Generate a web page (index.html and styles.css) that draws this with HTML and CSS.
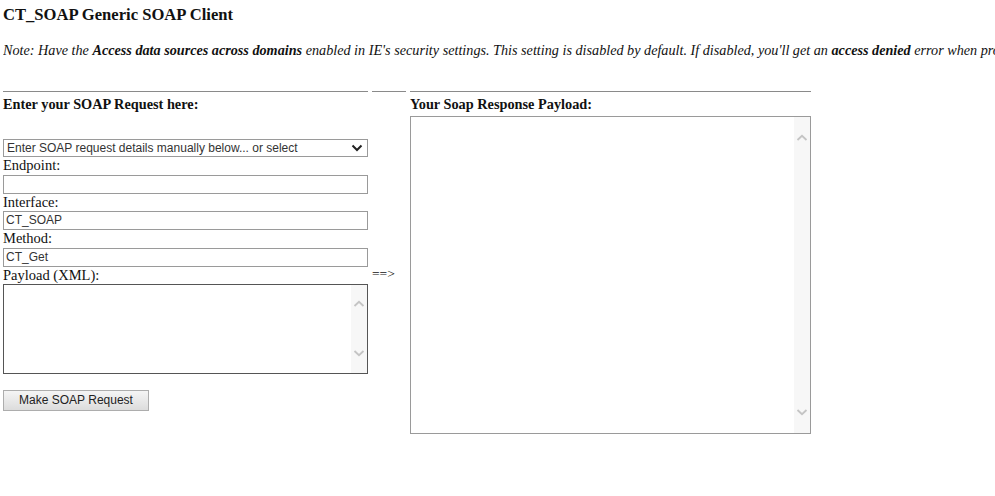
FILE: index.html
```html
<!DOCTYPE html>
<html>
<head>
<meta charset="utf-8">
<title>CT_SOAP Generic SOAP Client</title>
<link rel="stylesheet" href="styles.css">
</head>
<body>
<h3 class="title">CT_SOAP Generic SOAP Client</h3>
<p class="note">Note: Have the <b>Access data sources across domains</b> enabled in IE's security settings. This setting is disabled by default. If disabled, you'll get an <b>access denied</b> error when processing the request.</p>
<div class="layout">
  <div class="col col-req">
    <div class="head">Enter your SOAP Request here:</div>
    <div class="spacer"></div>
    <div class="select">
      <span class="select-text">Enter SOAP request details manually below... or select</span>
      <svg class="select-arrow" width="12" height="8" viewBox="0 0 12 8"><polyline points="1.5,1.5 6,6 10.5,1.5" fill="none" stroke="#222" stroke-width="2"/></svg>
    </div>
    <div class="label">Endpoint:</div>
    <div class="input"></div>
    <div class="label">Interface:</div>
    <div class="input">CT_SOAP</div>
    <div class="label">Method:</div>
    <div class="input">CT_Get</div>
    <div class="label">Payload (XML):</div>
    <div class="area area-req">
      <div class="area-body"></div>
      <div class="sbar">
        <svg width="12" height="8" viewBox="0 0 12 8"><polyline points="1.5,6 6,1.8 10.5,6" fill="none" stroke="#c4c4c4" stroke-width="1.8"/></svg>
        <svg width="12" height="8" viewBox="0 0 12 8"><polyline points="1.5,2 6,6.2 10.5,2" fill="none" stroke="#c4c4c4" stroke-width="1.8"/></svg>
      </div>
    </div>
    <div class="btn">Make SOAP Request</div>
  </div>
  <div class="col col-arrow">
    <div class="arrow">==&gt;</div>
  </div>
  <div class="col col-resp">
    <div class="head">Your Soap Response Payload:</div>
    <div class="area area-resp">
      <div class="area-body"></div>
      <div class="sbar">
        <svg width="12" height="8" viewBox="0 0 12 8"><polyline points="1.5,6 6,1.8 10.5,6" fill="none" stroke="#c4c4c4" stroke-width="1.8"/></svg>
        <svg width="12" height="8" viewBox="0 0 12 8"><polyline points="1.5,2 6,6.2 10.5,2" fill="none" stroke="#c4c4c4" stroke-width="1.8"/></svg>
      </div>
    </div>
  </div>
</div>
</body>
</html>
```

FILE: styles.css
```css
html, body {
  margin: 0;
  padding: 0;
  overflow: hidden;
  background: #fff;
}
body {
  padding: 0 0 0 3px;
  font-family: "Liberation Serif", "Times New Roman", serif;
  color: #111;
  font-size: 14.5px;
}
.title {
  margin: 0;
  padding-top: 5px;
  font-size: 16.6px;
  line-height: 20px;
  font-weight: bold;
}
.note {
  margin: 17px 0 0 0;
  font-style: italic;
  font-size: 14.2px;
  line-height: 17px;
  white-space: nowrap;
  overflow: hidden;
}
.layout {
  display: grid;
  grid-template-columns: 365px 34px 401px;
  column-gap: 4px;
  margin-top: 32px;
}
.col {
  border-top: 1px solid #8a8a8a;
}
.head {
  font-weight: bold;
  font-size: 14.3px;
  line-height: 17px;
  padding-top: 4px;
}
.spacer {
  height: 26px;
}
.select {
  box-sizing: border-box;
  height: 18px;
  border: 1px solid #9a9a9a;
  display: flex;
  align-items: center;
  justify-content: space-between;
  padding: 0 4px 0 3px;
  font-family: "Liberation Sans", Arial, sans-serif;
  font-size: 12px;
  color: #333;
}
.label {
  height: 17.5px;
  line-height: 17px;
}
.input {
  box-sizing: border-box;
  height: 19px;
  border: 1px solid #9a9a9a;
  padding: 0 2px;
  font-family: "Liberation Sans", Arial, sans-serif;
  font-size: 12px;
  line-height: 17px;
  color: #333;
}
.area {
  box-sizing: border-box;
  display: flex;
  border: 1px solid #9a9a9a;
}
.area-req {
  height: 90px;
  border-color: #555;
}
.area-resp {
  height: 318px;
  margin-top: 3px;
}
.area-body {
  flex: 1;
}
.sbar {
  width: 16px;
  background: #f7f7f7;
  display: flex;
  flex-direction: column;
  justify-content: space-between;
  align-items: center;
  padding: 15px 0 16px;
}
.area-resp .sbar {
  padding: 17px 0 17px;
}
.btn {
  box-sizing: border-box;
  width: 146px;
  height: 21px;
  margin-top: 16px;
  border: 1px solid #adadad;
  background: linear-gradient(#f5f5f5, #dcdcdc);
  font-family: "Liberation Sans", Arial, sans-serif;
  font-size: 12px;
  line-height: 19px;
  text-align: center;
  color: #222;
}
.arrow {
  font-size: 13.5px;
  padding-top: 174px;
}
```
